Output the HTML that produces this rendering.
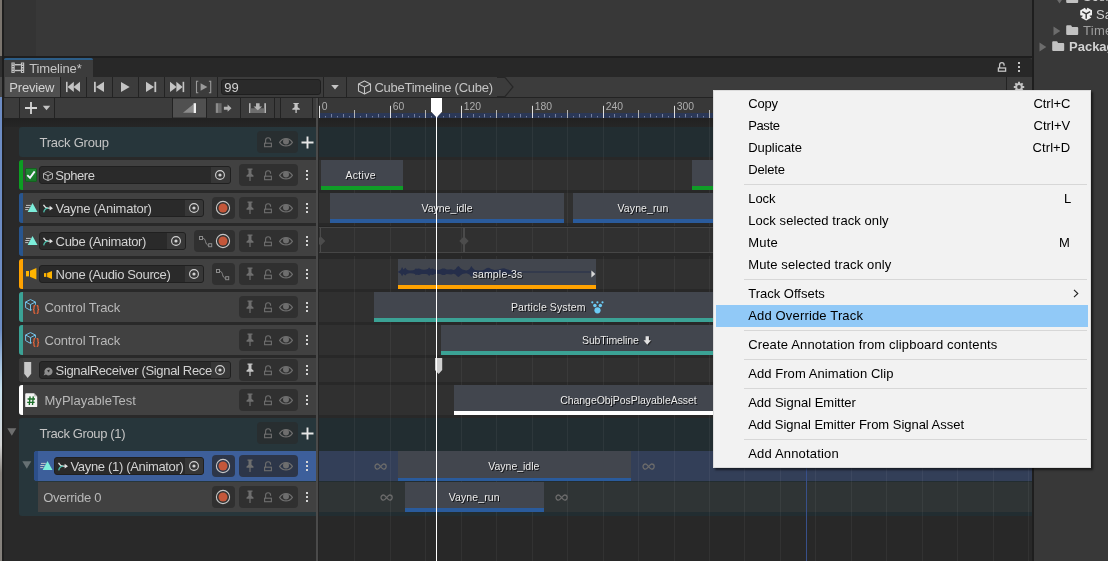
<!DOCTYPE html>
<html><head><meta charset="utf-8"><title>Timeline</title>
<style>
html,body{margin:0;padding:0;background:#383838}
#root{will-change:transform;position:relative;width:1108px;height:561px;overflow:hidden;font-family:"Liberation Sans",sans-serif}
.b{position:absolute;display:block}
.t{position:absolute;white-space:nowrap;font-family:"Liberation Sans",sans-serif}
.cl{text-shadow:1px 1px 0 rgba(0,0,0,.75)}
</style></head>
<body><div id="root">
<!-- panels -->
<div class="b" style="left:0px;top:0px;width:1108px;height:561px;background:#383838;"></div>
<div class="b" style="left:4px;top:0px;width:32px;height:56px;background:#343434;"></div>
<div class="b" style="left:0px;top:0px;width:3px;height:56px;background:#7b756e;"></div>
<div class="b" style="left:0px;top:56px;width:3px;height:21px;background:#303030;"></div>
<div class="b" style="left:0px;top:77px;width:3px;height:20px;background:#4a4a4a;"></div>
<div class="b" style="left:0px;top:97px;width:3px;height:464px;background:linear-gradient(#6d8cc4 0,#6d8cc4 50%,#a8c4e0 58%,#c8e0ec 63%,#d4d4d4 75%,#8a8681 81%,#85817c 100%);"></div>
<div class="b" style="left:2px;top:0px;width:2px;height:561px;background:#1e1e1e;"></div>
<div class="b" style="left:3px;top:56px;width:1031px;height:2px;background:#1e1e1e;"></div>
<div class="b" style="left:4px;top:58px;width:1028px;height:19px;background:#282828;border-radius:0 3px 0 0;"></div>
<div class="b" style="left:4px;top:77px;width:1028px;height:20px;background:#3c3c3c;"></div>
<div class="b" style="left:4px;top:97px;width:1028px;height:1px;background:#232323;"></div>
<div class="b" style="left:4px;top:98px;width:312px;height:20px;background:#3c3c3c;"></div>
<div class="b" style="left:319px;top:98px;width:713px;height:20px;background:#383838;"></div>
<div class="b" style="left:4px;top:118px;width:1028px;height:1px;background:#222;"></div>
<div class="b" style="left:4px;top:119px;width:312px;height:442px;background:#292929;"></div>
<div class="b" style="left:319px;top:119px;width:713px;height:442px;background:#282828;"></div>
<div class="b" style="left:1032px;top:0px;width:2px;height:561px;background:#1e1e1e;"></div>
<div class="b" style="left:1034px;top:0px;width:74px;height:561px;background:#383838;"></div>
<!-- tab -->
<div class="b" style="left:4px;top:58px;width:89px;height:19px;background:#3c3c3c;border-radius:3px 3px 0 0;"></div>
<div class="b" style="left:4px;top:58px;width:89px;height:2px;background:#2c5d87;border-radius:3px 3px 0 0;"></div>
<svg class="b" style="left:11px;top:62px;" width="14" height="11" viewBox="0 0 14 11"><g fill="#c4c4c4"><rect x="0.400" y="0.500" width="3.300" height="10.400"/><rect x="9.900" y="0.500" width="3.300" height="10.400"/><rect x="3.700" y="2" width="6.200" height="1.400"/><rect x="3.700" y="7.800" width="6.200" height="1.400"/></g><g fill="#3c3c3c"><path d="M1.500 1.400h1.100v1.100H1.500zM1.500 3.900h1.100v1.100H1.500zM1.500 6.400h1.100v1.100H1.500zM1.500 8.900h1.100v1.100H1.500zM11 1.400h1.100v1.100H11zM11 3.900h1.100v1.100H11zM11 6.400h1.100v1.100H11zM11 8.900h1.100v1.100H11z"/></g></svg>
<div class="t " style="left:29.3px;top:59.50px;height:17px;line-height:17px;font-size:13px;color:#c4c4c4;letter-spacing:-0.156px;">Timeline*</div>
<svg class="b" style="left:997px;top:61px;" width="10" height="11" viewBox="0 0 10 11"><g stroke="#c4c4c4" fill="none" stroke-width="1.300"><path d="M2.600 7V3.900A2.250 2.250 0 0 1 7.100 3.900V4.700"/><rect x="1.400" y="7" width="7.200" height="3.200"/></g></svg>
<svg class="b" style="left:1018px;top:62px;" width="2" height="10" viewBox="0 0 2 10"><g fill="#c4c4c4"><path d="M0 0h2v2H0zM0 4h2v2H0zM0 8h2v2H0z"/></g></svg>
<!-- toolbar 1 -->
<div class="b" style="left:5px;top:77px;width:55px;height:20px;background:#505050;"></div>
<div class="t " style="left:9.3px;top:79.00px;height:17px;line-height:17px;font-size:13px;color:#d2d2d2;letter-spacing:-0.177px;">Preview</div>
<div class="b" style="left:60px;top:77px;width:1px;height:20px;background:#232323;"></div>
<div class="b" style="left:86px;top:77px;width:1px;height:20px;background:#232323;"></div>
<div class="b" style="left:112px;top:77px;width:1px;height:20px;background:#232323;"></div>
<div class="b" style="left:138px;top:77px;width:1px;height:20px;background:#232323;"></div>
<div class="b" style="left:164px;top:77px;width:1px;height:20px;background:#232323;"></div>
<div class="b" style="left:190px;top:77px;width:1px;height:20px;background:#232323;"></div>
<div class="b" style="left:217px;top:77px;width:1px;height:20px;background:#232323;"></div>
<div class="b" style="left:323px;top:77px;width:1px;height:20px;background:#232323;"></div>
<div class="b" style="left:346px;top:77px;width:1px;height:20px;background:#232323;"></div>
<div class="b" style="left:1006px;top:77px;width:1px;height:20px;background:#232323;"></div>
<svg class="b" style="left:61px;top:77px;" width="25" height="20" viewBox="0 0 25 20"><g fill="#c4c4c4"><rect x="5" y="4.800" width="1.600" height="10.300"/><path d="M12.8 4.8L6.6 9.95L12.8 15.100000000000001z"/><path d="M19.0 4.8L12.4 9.95L19.0 15.100000000000001z"/></g></svg>
<svg class="b" style="left:87px;top:77px;" width="25" height="20" viewBox="0 0 25 20"><g fill="#c4c4c4"><rect x="7" y="4.800" width="1.800" height="10.300"/><path d="M17 4.8L9 9.95L17 15.100000000000001z"/></g></svg>
<svg class="b" style="left:113px;top:77px;" width="25" height="20" viewBox="0 0 25 20"><g fill="#c4c4c4"><path d="M8 4.9L16.7 9.9L8 14.9z"/></g></svg>
<svg class="b" style="left:139px;top:77px;" width="25" height="20" viewBox="0 0 25 20"><g fill="#c4c4c4"><path d="M7 4.8L15 9.95L7 15.100000000000001z"/><rect x="15.400" y="4.800" width="1.800" height="10.300"/></g></svg>
<svg class="b" style="left:165px;top:77px;" width="25" height="20" viewBox="0 0 25 20"><g fill="#c4c4c4"><path d="M5 4.8L11.6 9.95L5 15.100000000000001z"/><path d="M11.4 4.8L17.6 9.95L11.4 15.100000000000001z"/><rect x="17.600" y="4.800" width="1.600" height="10.300"/></g></svg>
<svg class="b" style="left:191px;top:77px;" width="26" height="20" viewBox="0 0 26 20"><g fill="none" stroke="#9a9a9a" stroke-width="1.100"><path d="M7.300 4.300H5.500V15.700H7.300M17.900 4.300H19.700V15.700H17.900"/></g><g fill="#9a9a9a"><path d="M9.6 6.2L16.4 10.0L9.6 13.8z"/></g></svg>
<div class="b" style="left:221px;top:79px;width:100px;height:16px;background:#2a2a2a;border:1px solid #1f1f1f;border-radius:3px;box-sizing:border-box;"></div>
<div class="t " style="left:224.3px;top:78.70px;height:17px;line-height:17px;font-size:13px;color:#d2d2d2;letter-spacing:-0.130px;">99</div>
<svg class="b" style="left:330px;top:84px;" width="10" height="6" viewBox="0 0 10 6"><path d="M1.200 1h7.600L5 5.400z" fill="#c4c4c4"/></svg>
<svg class="b" style="left:357px;top:79.6px;" width="15" height="15" viewBox="0 0 15 15"><g stroke="#c4c4c4"><g fill="none" stroke-width="1.100" stroke-linejoin="round"><path d="M7.500 1L13.500 4V11L7.500 14L1.500 11V4z"/><path d="M1.500 4L7.500 7L13.500 4M7.500 7V14"/></g></g></svg>
<div class="t " style="left:374.4px;top:78.70px;height:17px;line-height:17px;font-size:13px;color:#c4c4c4;letter-spacing:-0.241px;">CubeTimeline (Cube)</div>
<svg class="b" style="left:496px;top:77px;" width="18" height="20" viewBox="0 0 18 20"><path d="M1 0.500H9L17 10L9 19.500H1" fill="none" stroke="#272727" stroke-width="1.200"/></svg>
<svg class="b" style="left:1012px;top:80px;" width="14" height="14" viewBox="0 0 14 14"><path d="M5.96 3.24L6.10 1.78L7.90 1.78L8.04 3.24L8.92 3.61L10.06 2.67L11.33 3.94L10.39 5.08L10.76 5.96L12.22 6.10L12.22 7.90L10.76 8.04L10.39 8.92L11.33 10.06L10.06 11.33L8.92 10.39L8.04 10.76L7.90 12.22L6.10 12.22L5.96 10.76L5.08 10.39L3.94 11.33L2.67 10.06L3.61 8.92L3.24 8.04L1.78 7.90L1.78 6.10L3.24 5.96L3.61 5.08L2.67 3.94L3.94 2.67L5.08 3.61z" fill="#c4c4c4"/><circle cx="7" cy="7" r="1.900" fill="#3c3c3c"/></svg>
<!-- toolbar 2 -->
<div class="b" style="left:19px;top:98px;width:1px;height:20px;background:#232323;"></div>
<div class="b" style="left:54px;top:98px;width:1px;height:20px;background:#232323;"></div>
<div class="b" style="left:172px;top:98px;width:1px;height:20px;background:#232323;"></div>
<div class="b" style="left:206px;top:98px;width:1px;height:20px;background:#232323;"></div>
<div class="b" style="left:240px;top:98px;width:1px;height:20px;background:#232323;"></div>
<div class="b" style="left:274px;top:98px;width:1px;height:20px;background:#232323;"></div>
<div class="b" style="left:280px;top:98px;width:1px;height:20px;background:#232323;"></div>
<div class="b" style="left:312px;top:98px;width:1px;height:20px;background:#232323;"></div>
<div class="b" style="left:173px;top:99px;width:33px;height:18px;background:#505050;"></div>
<svg class="b" style="left:24px;top:101px;" width="14" height="14" viewBox="0 0 14 14"><path d="M7 1v12M1 7h12" stroke="#d6d6d6" stroke-width="1.800" fill="none"/></svg>
<svg class="b" style="left:41.5px;top:105.2px;" width="9" height="6" viewBox="0 0 9 6"><path d="M0.800 0.800h7.400L4.500 5.200z" fill="#c4c4c4"/></svg>
<svg class="b" style="left:180px;top:101px;" width="20" height="14" viewBox="0 0 20 14"><path d="M3 11.700H13.600V3z" fill="#8c8c8c"/><rect x="13.600" y="2.200" width="2.400" height="9.800" fill="#f0f0f0"/></svg>
<svg class="b" style="left:214px;top:101px;" width="20" height="14" viewBox="0 0 20 14"><rect x="1.800" y="2.200" width="2.800" height="9.700" fill="#8c8c8c"/><rect x="4.600" y="2.200" width="3" height="9.700" fill="#6a6a6a"/><path d="M9.900 5.700h3.700V3.600l3.900 3.600-3.900 3.600V8.700H9.900z" fill="#b4b4b4"/></svg>
<svg class="b" style="left:247px;top:101px;" width="20" height="14" viewBox="0 0 20 14"><rect x="2" y="2.200" width="1.600" height="9.800" fill="#b4b4b4"/><rect x="17.300" y="2.200" width="1.700" height="9.800" fill="#b4b4b4"/><rect x="3.600" y="7.300" width="13.700" height="4.700" fill="#6e6e6e"/><path d="M9 2.200h3.600V5.500h2.500l-4.300 3.800-4.300-3.800H9z" fill="#b4b4b4"/></svg>
<svg class="b" style="left:290px;top:101px;" width="12" height="14" viewBox="0 0 12 14"><g fill="#c4c4c4" transform="translate(-0.400 1.700) scale(1.080 0.800)"><path d="M3.500 0.500h5v1.200h-1v4l2 1.800v1.200H6.600V13H5.400V8.700H2.500V7.500l2-1.800v-4h-1z"/></g></svg>
<!-- ruler -->
<div class="b" style="left:319px;top:113px;width:713px;height:5px;background:#2b3857;"></div>
<div class="t " style="left:321.8px;top:99.50px;height:14.4px;line-height:14.4px;font-size:10.4px;color:#adadad;">0</div>
<div class="t " style="left:392.8px;top:99.50px;height:14.4px;line-height:14.4px;font-size:10.4px;color:#adadad;">60</div>
<div class="t " style="left:463.8px;top:99.50px;height:14.4px;line-height:14.4px;font-size:10.4px;color:#adadad;">120</div>
<div class="t " style="left:534.8px;top:99.50px;height:14.4px;line-height:14.4px;font-size:10.4px;color:#adadad;">180</div>
<div class="t " style="left:605.8px;top:99.50px;height:14.4px;line-height:14.4px;font-size:10.4px;color:#adadad;">240</div>
<div class="t " style="left:676.8px;top:99.50px;height:14.4px;line-height:14.4px;font-size:10.4px;color:#adadad;">300</div>
<div class="t " style="left:746.8px;top:99.50px;height:14.4px;line-height:14.4px;font-size:10.4px;color:#adadad;">360</div>
<div class="t " style="left:817.8px;top:99.50px;height:14.4px;line-height:14.4px;font-size:10.4px;color:#adadad;">420</div>
<div class="t " style="left:888.8px;top:99.50px;height:14.4px;line-height:14.4px;font-size:10.4px;color:#adadad;">480</div>
<div class="t " style="left:959.8px;top:99.50px;height:14.4px;line-height:14.4px;font-size:10.4px;color:#adadad;">540</div>
<div class="t " style="left:1030.8px;top:99.50px;height:14.4px;line-height:14.4px;font-size:10.4px;color:#adadad;">600</div>
<svg class="b" style="left:319px;top:98px;" width="712" height="20" viewBox="0 0 712 20"><path d="M6.5 18v1.400M12.5 16v3.400M18.5 18v1.400M24.5 16v3.400M30.5 18v1.400M41.5 18v1.400M47.5 16v3.400M53.5 18v1.400M59.5 16v3.400M65.5 18v1.400M77.5 18v1.400M83.5 16v3.400M89.5 18v1.400M95.5 16v3.400M100.5 18v1.400M112.5 18v1.400M118.5 16v3.400M124.5 18v1.400M130.5 16v3.400M136.5 18v1.400M148.5 18v1.400M154.5 16v3.400M160.5 18v1.400M165.5 16v3.400M171.5 18v1.400M183.5 18v1.400M189.5 16v3.400M195.5 18v1.400M201.5 16v3.400M207.5 18v1.400M219.5 18v1.400M225.5 16v3.400M230.5 18v1.400M236.5 16v3.400M242.5 18v1.400M254.5 18v1.400M260.5 16v3.400M266.5 18v1.400M272.5 16v3.400M278.5 18v1.400M290.5 18v1.400M295.5 16v3.400M301.5 18v1.400M307.5 16v3.400M313.5 18v1.400M325.5 18v1.400M331.5 16v3.400M337.5 18v1.400M343.5 16v3.400M349.5 18v1.400M360.5 18v1.400M366.5 16v3.400M372.5 18v1.400M378.5 16v3.400M384.5 18v1.400M396.5 18v1.400M402.5 16v3.400M408.5 18v1.400M414.5 16v3.400M419.5 18v1.400M431.5 18v1.400M437.5 16v3.400M443.5 18v1.400M449.5 16v3.400M455.5 18v1.400M467.5 18v1.400M473.5 16v3.400M479.5 18v1.400M484.5 16v3.400M490.5 18v1.400M502.5 18v1.400M508.5 16v3.400M514.5 18v1.400M520.5 16v3.400M526.5 18v1.400M538.5 18v1.400M544.5 16v3.400M549.5 18v1.400M555.5 16v3.400M561.5 18v1.400M573.5 18v1.400M579.5 16v3.400M585.5 18v1.400M591.5 16v3.400M597.5 18v1.400M609.5 18v1.400M614.5 16v3.400M620.5 18v1.400M626.5 16v3.400M632.5 18v1.400M644.5 18v1.400M650.5 16v3.400M656.5 18v1.400M662.5 16v3.400M668.5 18v1.400M679.5 18v1.400M685.5 16v3.400M691.5 18v1.400M697.5 16v3.400M703.5 18v1.400" stroke="#76809f" stroke-width="1"/><path d="M35.5 12v8M106.5 12v8M177.5 12v8M248.5 12v8M319.5 12v8M390.5 12v8M461.5 12v8M532.5 12v8M603.5 12v8M674.5 12v8" stroke="#b4b4b4" stroke-width="1"/><path d="M0.5 7.800v12.200M71.5 7.800v12.200M142.5 7.800v12.200M213.5 7.800v12.200M284.5 7.800v12.200M355.5 7.800v12.200M425.5 7.800v12.200M496.5 7.800v12.200M567.5 7.800v12.200M638.5 7.800v12.200M709.5 7.800v12.200" stroke="#dedede" stroke-width="1"/></svg>
<div class="b" style="left:4px;top:119px;width:1028px;height:8px;background:linear-gradient(#222222,#262626);"></div>
<!-- clip-area rows -->
<div class="b" style="left:319px;top:127px;width:713px;height:30px;background:#222d31;"></div>
<div class="b" style="left:319px;top:160px;width:713px;height:30px;background:#303030;"></div>
<div class="b" style="left:319px;top:193px;width:713px;height:30px;background:#303030;"></div>
<div class="b" style="left:319px;top:226px;width:713px;height:30px;background:#303030;"></div>
<div class="b" style="left:319px;top:259px;width:713px;height:30px;background:#303030;"></div>
<div class="b" style="left:319px;top:292px;width:713px;height:30px;background:#303030;"></div>
<div class="b" style="left:319px;top:325px;width:713px;height:30px;background:#303030;"></div>
<div class="b" style="left:319px;top:358px;width:713px;height:24px;background:#303030;"></div>
<div class="b" style="left:319px;top:385px;width:713px;height:30px;background:#303030;"></div>
<div class="b" style="left:319px;top:418px;width:713px;height:98px;background:#222d31;"></div>
<div class="b" style="left:319px;top:451px;width:713px;height:30px;background:#333f58;"></div>
<div class="b" style="left:319px;top:482px;width:713px;height:30px;background:#2f3435;"></div>
<svg class="b" style="left:319px;top:118px;" width="712" height="443" viewBox="0 0 712 443"><path d="M35.5 0v443M71.5 0v443M106.5 0v443M142.5 0v443M177.5 0v443M213.5 0v443M248.5 0v443M284.5 0v443M319.5 0v443M355.5 0v443M390.5 0v443M425.5 0v443M461.5 0v443M496.5 0v443M532.5 0v443M567.5 0v443M603.5 0v443M638.5 0v443M674.5 0v443M709.5 0v443" stroke="#ffffff" stroke-opacity="0.050" stroke-width="1"/><path d="M487.500 349V443" stroke="#38508a" stroke-width="1"/></svg>
<div class="b" style="left:316px;top:98px;width:2.2px;height:463px;background:#4a4a4a;"></div><div class="b" style="left:318.2px;top:98px;width:0.8px;height:463px;background:#252525;"></div>
<!-- track group -->
<div class="b" style="left:19px;top:127px;width:297px;height:30px;background:#27363b;border-radius:3px 0 0 3px;"></div>
<div class="t " style="left:39.5px;top:133.80px;height:17px;line-height:17px;font-size:13px;color:#c4c4c4;letter-spacing:-0.233px;">Track Group</div>
<div class="b" style="left:257px;top:131.0px;width:41px;height:22px;background:#282e30;border-radius:4px;"></div><svg class="b" style="left:263px;top:136.0px;" width="10" height="12" viewBox="0 0 10 12"><g stroke="#6e6e6e"><path d="M2.600 7.200V4.300A2.500 2.500 0 0 1 7.600 4.300V4.700" fill="none" stroke-width="1.100"/><rect x="1.600" y="7.200" width="6.800" height="3.500" fill="none" stroke-width="1.100"/></g></svg><svg class="b" style="left:279px;top:137.8px;" width="14" height="9" viewBox="0 0 14 9"><g stroke="#6e6e6e" fill="#6e6e6e"><path d="M0.600 4.300C2.600 1.400 5 0.700 7 0.700S11.400 1.400 13.400 4.300C11.400 7.200 9 7.900 7 7.900S2.600 7.200 0.600 4.300z" fill="none" stroke-width="1.200"/><circle cx="7" cy="3.600" r="3" stroke="none"/></g></svg>
<svg class="b" style="left:300.5px;top:135.5px;" width="13" height="13" viewBox="0 0 13 13"><path d="M6.500 0.500v12M0.500 6.500h12" stroke="#e6e6e6" stroke-width="1.900" fill="none"/></svg>
<!-- sphere -->
<div class="b" style="left:19px;top:160px;width:297px;height:30px;background:#414141;border-radius:3px 0 0 3px;"></div><div class="b" style="left:19px;top:160px;width:4px;height:30px;background:#0c9e22;border-radius:3px 0 0 3px;"></div>
<div class="b" style="left:25px;top:168px;width:12.3px;height:14px;background:linear-gradient(#1f8a31,#187629);border:1px solid #14611f;box-sizing:border-box;border-radius:1px;"></div>
<svg class="b" style="left:26px;top:170px;" width="10" height="10" viewBox="0 0 10 10"><path d="M1.300 5.200L4 7.900L8.700 1.400" fill="none" stroke="#f4f0ff" stroke-width="1.900"/></svg>
<div class="b" style="left:39px;top:166px;width:192px;height:18px;background:#2a2a2a;border:1px solid #202020;border-radius:3px;box-sizing:border-box;"></div><div class="b" style="left:211px;top:167px;width:19px;height:16px;background:#373737;border-radius:0 2px 2px 0;"></div><svg class="b" style="left:213.6px;top:168.8px;" width="12" height="12" viewBox="0 0 12 12"><circle cx="6" cy="6" r="4.400" fill="none" stroke="#d2d2d2" stroke-width="1.100"/><circle cx="6" cy="6" r="1.600" fill="#d2d2d2"/></svg>
<svg class="b" style="left:42.7px;top:171px;" width="10" height="10" viewBox="0 0 10 10"><g fill="none" stroke="#b8b8b8" stroke-width="0.950" stroke-linejoin="round"><path d="M5 0.500L9.500 2.600L5 4.700L0.500 2.600z"/><path d="M0.500 2.600V7.400L5 9.500L9.500 7.400V2.600M5 4.700V9.500"/></g></svg>
<div class="t " style="left:55.2px;top:166.80px;height:17px;line-height:17px;font-size:13px;color:#d2d2d2;letter-spacing:-0.437px;">Sphere</div>
<div class="b" style="left:239px;top:164.0px;width:59px;height:22px;background:#303030;border-radius:4px;"></div><svg class="b" style="left:244px;top:167.7px;" width="12" height="14" viewBox="0 0 12 14"><g fill="#6e6e6e"><path d="M3.500 0.500h5v1.200h-1v4l2 1.800v1.200H6.600V13H5.400V8.700H2.500V7.500l2-1.800v-4h-1z"/></g></svg><svg class="b" style="left:263px;top:169.0px;" width="10" height="12" viewBox="0 0 10 12"><g stroke="#6e6e6e"><path d="M2.600 7.200V4.300A2.500 2.500 0 0 1 7.600 4.300V4.700" fill="none" stroke-width="1.100"/><rect x="1.600" y="7.200" width="6.800" height="3.500" fill="none" stroke-width="1.100"/></g></svg><svg class="b" style="left:279px;top:170.8px;" width="14" height="9" viewBox="0 0 14 9"><g stroke="#6e6e6e" fill="#6e6e6e"><path d="M0.600 4.300C2.600 1.400 5 0.700 7 0.700S11.400 1.400 13.400 4.300C11.400 7.200 9 7.900 7 7.900S2.600 7.200 0.600 4.300z" fill="none" stroke-width="1.200"/><circle cx="7" cy="3.600" r="3" stroke="none"/></g></svg>
<svg class="b" style="left:306px;top:170px;" width="2" height="10" viewBox="0 0 2 10"><g fill="#d4d4d4"><path d="M0 0h2v2H0zM0 4h2v2H0zM0 8h2v2H0z"/></g></svg>
<div class="b" style="left:321px;top:160px;width:82px;height:30px;background:#42464e;"></div><div class="b" style="left:321px;top:186px;width:82px;height:4px;background:#0f9d27;"></div><div class="t cl" style="left:345.4px;top:168.45px;height:14.5px;line-height:14.5px;font-size:10.5px;color:#ececec;letter-spacing:0.318px;">Active</div>
<div class="b" style="left:692px;top:160px;width:40px;height:30px;background:#42464e;"></div><div class="b" style="left:692px;top:186px;width:40px;height:4px;background:#0f9d27;"></div>
<!-- vayne -->
<div class="b" style="left:19px;top:193px;width:297px;height:30px;background:#414141;border-radius:3px 0 0 3px;"></div><div class="b" style="left:19px;top:193px;width:4px;height:30px;background:#28558e;border-radius:3px 0 0 3px;"></div>
<svg class="b" style="left:24.8px;top:203.3px;" width="13" height="9" viewBox="0 0 13 9"><path d="M7.500 0L12.500 9H2.600z" fill="#7deedb"/><path d="M1 2.400h4.800M0.300 4.500h4.300M0.200 6.600h3.200" stroke="#cfcfcf" stroke-width="0.900"/></svg>
<div class="b" style="left:39px;top:199px;width:165px;height:18px;background:#2a2a2a;border:1px solid #202020;border-radius:3px;box-sizing:border-box;"></div><div class="b" style="left:185px;top:200px;width:18px;height:16px;background:#373737;border-radius:0 2px 2px 0;"></div><svg class="b" style="left:187.6px;top:201.8px;" width="12" height="12" viewBox="0 0 12 12"><circle cx="6" cy="6" r="4.400" fill="none" stroke="#d2d2d2" stroke-width="1.100"/><circle cx="6" cy="6" r="1.600" fill="#d2d2d2"/></svg>
<svg class="b" style="left:43px;top:204.4px;" width="10" height="9" viewBox="0 0 10 9"><path d="M0.500 0.700C2 3.600 3.400 4.200 5.200 4.200H7.200" fill="none" stroke="#e0e0e0" stroke-width="1.300"/><path d="M0.700 8.300C1.300 5.600 2.600 4.200 5.200 4.200" fill="none" stroke="#4fc1ae" stroke-width="1.300"/><path d="M6.600 1.800L10 4.200L6.600 6.600z" fill="#e0e0e0"/></svg>
<div class="t " style="left:55.6px;top:199.80px;height:17px;line-height:17px;font-size:13px;color:#d2d2d2;letter-spacing:-0.262px;">Vayne (Animator)</div>
<div class="b" style="left:212px;top:197px;width:23px;height:22px;background:#303030;border-radius:4px;"></div>
<svg class="b" style="left:215px;top:200px;" width="16" height="16" viewBox="0 0 16 16"><circle cx="8" cy="8" r="6.600" fill="none" stroke="#c6c6c6" stroke-width="1.100"/><circle cx="8" cy="8" r="4.500" fill="#c4573a"/></svg>
<div class="b" style="left:239px;top:197.0px;width:59px;height:22px;background:#303030;border-radius:4px;"></div><svg class="b" style="left:244px;top:200.7px;" width="12" height="14" viewBox="0 0 12 14"><g fill="#6e6e6e"><path d="M3.500 0.500h5v1.200h-1v4l2 1.800v1.200H6.600V13H5.400V8.700H2.500V7.500l2-1.800v-4h-1z"/></g></svg><svg class="b" style="left:263px;top:202.0px;" width="10" height="12" viewBox="0 0 10 12"><g stroke="#6e6e6e"><path d="M2.600 7.200V4.300A2.500 2.500 0 0 1 7.600 4.300V4.700" fill="none" stroke-width="1.100"/><rect x="1.600" y="7.200" width="6.800" height="3.500" fill="none" stroke-width="1.100"/></g></svg><svg class="b" style="left:279px;top:203.8px;" width="14" height="9" viewBox="0 0 14 9"><g stroke="#6e6e6e" fill="#6e6e6e"><path d="M0.600 4.300C2.600 1.400 5 0.700 7 0.700S11.400 1.400 13.400 4.300C11.400 7.200 9 7.900 7 7.900S2.600 7.200 0.600 4.300z" fill="none" stroke-width="1.200"/><circle cx="7" cy="3.600" r="3" stroke="none"/></g></svg>
<svg class="b" style="left:306px;top:203px;" width="2" height="10" viewBox="0 0 2 10"><g fill="#d4d4d4"><path d="M0 0h2v2H0zM0 4h2v2H0zM0 8h2v2H0z"/></g></svg>
<div class="b" style="left:330px;top:193px;width:234px;height:30px;background:#42464e;"></div><div class="b" style="left:330px;top:219px;width:234px;height:4px;background:#2a5b9c;"></div><div class="t cl" style="left:421.5px;top:201.45px;height:14.5px;line-height:14.5px;font-size:10.5px;color:#ececec;letter-spacing:-0.018px;">Vayne_idle</div>
<div class="b" style="left:573px;top:193px;width:150px;height:30px;background:#42464e;"></div><div class="b" style="left:573px;top:219px;width:150px;height:4px;background:#2a5b9c;"></div><div class="t cl" style="left:617.5px;top:201.45px;height:14.5px;line-height:14.5px;font-size:10.5px;color:#ececec;letter-spacing:0.110px;">Vayne_run</div>
<!-- cube -->
<div class="b" style="left:19px;top:226px;width:297px;height:30px;background:#414141;border-radius:3px 0 0 3px;"></div><div class="b" style="left:19px;top:226px;width:4px;height:30px;background:#28558e;border-radius:3px 0 0 3px;"></div>
<svg class="b" style="left:24.8px;top:236.3px;" width="13" height="9" viewBox="0 0 13 9"><path d="M7.500 0L12.500 9H2.600z" fill="#7deedb"/><path d="M1 2.400h4.800M0.300 4.500h4.300M0.200 6.600h3.200" stroke="#cfcfcf" stroke-width="0.900"/></svg>
<div class="b" style="left:39px;top:232px;width:147px;height:18px;background:#2a2a2a;border:1px solid #202020;border-radius:3px;box-sizing:border-box;"></div><div class="b" style="left:167px;top:233px;width:18px;height:16px;background:#373737;border-radius:0 2px 2px 0;"></div><svg class="b" style="left:169.6px;top:234.8px;" width="12" height="12" viewBox="0 0 12 12"><circle cx="6" cy="6" r="4.400" fill="none" stroke="#d2d2d2" stroke-width="1.100"/><circle cx="6" cy="6" r="1.600" fill="#d2d2d2"/></svg>
<svg class="b" style="left:43px;top:237.4px;" width="10" height="9" viewBox="0 0 10 9"><path d="M0.500 0.700C2 3.600 3.400 4.200 5.200 4.200H7.200" fill="none" stroke="#e0e0e0" stroke-width="1.300"/><path d="M0.700 8.300C1.300 5.600 2.600 4.200 5.200 4.200" fill="none" stroke="#4fc1ae" stroke-width="1.300"/><path d="M6.600 1.800L10 4.200L6.600 6.600z" fill="#e0e0e0"/></svg>
<div class="t " style="left:55.6px;top:232.80px;height:17px;line-height:17px;font-size:13px;color:#d2d2d2;letter-spacing:-0.325px;">Cube (Animator)</div>
<div class="b" style="left:194px;top:230px;width:41px;height:22px;background:#303030;border-radius:4px;"></div>
<svg class="b" style="left:198.5px;top:235.5px;" width="14" height="12" viewBox="0 0 14 12"><g stroke="#8a8a8a"><g fill="none" stroke-width="1"><rect x="0.500" y="0.500" width="3" height="3"/><rect x="9.700" y="7.700" width="3" height="3"/><path d="M3.500 2.200C7.800 2.200 5.400 9.200 9.700 9.200"/></g></g></svg>
<svg class="b" style="left:215px;top:233px;" width="16" height="16" viewBox="0 0 16 16"><circle cx="8" cy="8" r="6.600" fill="none" stroke="#c6c6c6" stroke-width="1.100"/><circle cx="8" cy="8" r="4.500" fill="#c4573a"/></svg>
<div class="b" style="left:239px;top:230.0px;width:59px;height:22px;background:#303030;border-radius:4px;"></div><svg class="b" style="left:244px;top:233.7px;" width="12" height="14" viewBox="0 0 12 14"><g fill="#6e6e6e"><path d="M3.500 0.500h5v1.200h-1v4l2 1.800v1.200H6.600V13H5.400V8.700H2.500V7.500l2-1.800v-4h-1z"/></g></svg><svg class="b" style="left:263px;top:235.0px;" width="10" height="12" viewBox="0 0 10 12"><g stroke="#6e6e6e"><path d="M2.600 7.200V4.300A2.500 2.500 0 0 1 7.600 4.300V4.700" fill="none" stroke-width="1.100"/><rect x="1.600" y="7.200" width="6.800" height="3.500" fill="none" stroke-width="1.100"/></g></svg><svg class="b" style="left:279px;top:236.8px;" width="14" height="9" viewBox="0 0 14 9"><g stroke="#6e6e6e" fill="#6e6e6e"><path d="M0.600 4.300C2.600 1.400 5 0.700 7 0.700S11.400 1.400 13.400 4.300C11.400 7.200 9 7.900 7 7.900S2.600 7.200 0.600 4.300z" fill="none" stroke-width="1.200"/><circle cx="7" cy="3.600" r="3" stroke="none"/></g></svg>
<svg class="b" style="left:306px;top:236px;" width="2" height="10" viewBox="0 0 2 10"><g fill="#d4d4d4"><path d="M0 0h2v2H0zM0 4h2v2H0zM0 8h2v2H0z"/></g></svg>
<div class="b" style="left:319px;top:227px;width:712px;height:1.2px;background:#464646;"></div>
<div class="b" style="left:319px;top:251.6px;width:712px;height:1.2px;background:#464646;"></div>
<div class="b" style="left:319px;top:226px;width:712px;height:1px;background:#242424;"></div>
<div class="b" style="left:319px;top:253px;width:712px;height:3px;background:#282828;"></div>
<div class="b" style="left:320px;top:228px;width:1.2px;height:24px;background:#4a4a4a;"></div>
<div class="b" style="left:463.4px;top:228px;width:1.2px;height:24px;background:#4a4a4a;"></div>
<svg class="b" style="left:319px;top:236px;" width="7" height="10" viewBox="0 0 7 10"><path d="M1.600 0.300L6.300 5L1.600 9.700L-3.100 5z" fill="#4c4c4c"/></svg>
<svg class="b" style="left:459px;top:236px;" width="10" height="10" viewBox="0 0 10 10"><path d="M5 0.300L9.700 5L5 9.700L0.300 5z" fill="#4c4c4c"/></svg>
<!-- audio -->
<div class="b" style="left:19px;top:259px;width:297px;height:30px;background:#414141;border-radius:3px 0 0 3px;"></div><div class="b" style="left:19px;top:259px;width:4px;height:30px;background:#ffa200;border-radius:3px 0 0 3px;"></div>
<svg class="b" style="left:26px;top:268.3px;" width="11" height="12" viewBox="0 0 11 12"><g fill="#ffb400"><path d="M0 3h3v5.400H0z"/><path d="M4 2.700L10.400 0V11.400L4 8.700z"/></g></svg>
<div class="b" style="left:39px;top:265px;width:165px;height:18px;background:#2a2a2a;border:1px solid #202020;border-radius:3px;box-sizing:border-box;"></div><div class="b" style="left:185px;top:266px;width:18px;height:16px;background:#373737;border-radius:0 2px 2px 0;"></div><svg class="b" style="left:187.6px;top:267.8px;" width="12" height="12" viewBox="0 0 12 12"><circle cx="6" cy="6" r="4.400" fill="none" stroke="#d2d2d2" stroke-width="1.100"/><circle cx="6" cy="6" r="1.600" fill="#d2d2d2"/></svg>
<svg class="b" style="left:43.8px;top:270.8px;" width="8.5" height="8" viewBox="0 0 8.5 8"><g fill="#ffb400" transform="scale(0.78 0.7)"><path d="M0 3h3v5.400H0z"/><path d="M4 2.700L10.400 0V11.400L4 8.700z"/></g></svg>
<div class="t " style="left:55.6px;top:265.80px;height:17px;line-height:17px;font-size:13px;color:#d2d2d2;letter-spacing:-0.348px;">None (Audio Source)</div>
<div class="b" style="left:212px;top:263px;width:23px;height:22px;background:#303030;border-radius:4px;"></div>
<svg class="b" style="left:216.3px;top:268.5px;" width="14" height="12" viewBox="0 0 14 12"><g stroke="#8a8a8a"><g fill="none" stroke-width="1"><rect x="0.500" y="0.500" width="3" height="3"/><rect x="9.700" y="7.700" width="3" height="3"/><path d="M3.500 2.200C7.800 2.200 5.400 9.200 9.700 9.200"/></g></g></svg>
<div class="b" style="left:239px;top:263.0px;width:59px;height:22px;background:#303030;border-radius:4px;"></div><svg class="b" style="left:244px;top:266.7px;" width="12" height="14" viewBox="0 0 12 14"><g fill="#6e6e6e"><path d="M3.500 0.500h5v1.200h-1v4l2 1.800v1.200H6.600V13H5.400V8.700H2.500V7.500l2-1.800v-4h-1z"/></g></svg><svg class="b" style="left:263px;top:268.0px;" width="10" height="12" viewBox="0 0 10 12"><g stroke="#6e6e6e"><path d="M2.600 7.200V4.300A2.500 2.500 0 0 1 7.600 4.300V4.700" fill="none" stroke-width="1.100"/><rect x="1.600" y="7.200" width="6.800" height="3.500" fill="none" stroke-width="1.100"/></g></svg><svg class="b" style="left:279px;top:269.8px;" width="14" height="9" viewBox="0 0 14 9"><g stroke="#6e6e6e" fill="#6e6e6e"><path d="M0.600 4.300C2.600 1.400 5 0.700 7 0.700S11.400 1.400 13.400 4.300C11.400 7.200 9 7.900 7 7.900S2.600 7.200 0.600 4.300z" fill="none" stroke-width="1.200"/><circle cx="7" cy="3.600" r="3" stroke="none"/></g></svg>
<svg class="b" style="left:306px;top:269px;" width="2" height="10" viewBox="0 0 2 10"><g fill="#d4d4d4"><path d="M0 0h2v2H0zM0 4h2v2H0zM0 8h2v2H0z"/></g></svg>
<div class="b" style="left:398px;top:259px;width:198px;height:30px;background:#42464e;"></div><div class="b" style="left:398px;top:285px;width:198px;height:4px;background:#ffa200;"></div>
<svg class="b" style="left:398.2px;top:265.4px;" width="195" height="14" viewBox="0 0 195 14"><path d="M0 7L0.0 6.7L1.6 5.8L2.7 5.0L4.1 2.0L5.4 4.6L7.3 2.8L8.7 4.6L10.3 5.2L11.9 5.5L15.2 5.2L16.8 4.6L17.9 3.2L19.0 4.0L20.0 3.6L21.1 3.5L23.8 4.6L26.0 4.8L28.2 4.5L29.8 4.0L31.2 2.4L32.5 4.0L34.7 3.5L37.0 4.6L40.1 5.0L42.2 4.6L44.4 3.4L46.6 3.6L48.7 4.6L50.9 4.4L53.1 4.2L55.8 5.0L57.6 4.0L59.0 2.0L60.7 1.0L62.3 3.0L64.4 4.6L68.2 5.5L69.9 5.0L71.5 4.0L73.4 1.0L74.7 3.0L76.9 5.0L81.2 5.5L84.5 5.2L86.6 4.5L88.8 3.0L91.0 2.8L93.1 4.0L96.4 5.0L100.7 4.5L104.0 3.5L106.1 3.2L109.4 4.5L113.7 5.4L117.0 5.8L120.2 6.1L123.5 6.4H193V7.600H123.5L123.5 7.5L120.2 7.8L117.0 8.0L113.7 8.4L109.4 9.1L106.1 10.2L104.0 10.0L100.7 9.1L96.4 8.7L93.1 9.6L91.0 10.6L88.8 10.4L86.6 9.1L84.5 8.5L81.2 8.3L76.9 8.7L74.7 10.4L73.4 12.1L71.5 9.6L69.9 8.7L68.2 8.3L64.4 9.0L62.3 10.4L60.7 12.1L59.0 11.2L57.6 9.6L55.8 8.7L53.1 9.4L50.9 9.2L48.7 9.0L46.6 9.9L44.4 10.1L42.2 9.0L40.1 8.7L37.0 9.0L34.7 10.0L32.5 9.6L31.2 10.9L29.8 9.6L28.2 9.1L26.0 8.9L23.8 9.0L21.1 10.0L20.0 9.9L19.0 9.6L17.9 10.2L16.8 9.0L15.2 8.5L11.9 8.3L10.3 8.5L8.7 9.0L7.3 10.6L5.4 9.0L4.1 11.2L2.7 8.7L1.6 8.0L0.0 7.3z" fill="#252e4a"/></svg>
<svg class="b" style="left:590.5px;top:269.5px;" width="5" height="8" viewBox="0 0 5 8"><path d="M0.400 0.600L4.400 4L0.400 7.400z" fill="#d8d8d8"/></svg>
<div class="t cl" style="left:472.5px;top:267.45px;height:14.5px;line-height:14.5px;font-size:10.5px;color:#ececec;letter-spacing:0.174px;">sample-3s</div>
<!-- control tracks -->
<div class="b" style="left:19px;top:292px;width:297px;height:30px;background:#414141;border-radius:3px 0 0 3px;"></div><div class="b" style="left:19px;top:292px;width:4px;height:30px;background:#3ba295;border-radius:3px 0 0 3px;"></div>
<svg class="b" style="left:24.6px;top:299.4px;" width="15" height="15" viewBox="0 0 15 15"><g fill="none" stroke="#74c4ea" stroke-width="1" stroke-linejoin="round"><path d="M5.500 0.600L10.400 3V8.600L5.500 11.400L0.600 8.600V3z"/><path d="M0.600 3L5.500 5.600L10.400 3M5.500 5.600V11.400"/></g><rect x="6.800" y="5.800" width="8" height="9.500" fill="#414141"/><g fill="none" stroke="#f0673a" stroke-width="1.150"><path d="M10.300 6.600H9.900Q9 6.600 9 7.500V9.400Q9 10.500 7.900 10.500Q9 10.500 9 11.600V13.500Q9 14.400 9.900 14.400H10.300"/><path d="M11.700 6.600H12.100Q13 6.600 13 7.500V9.400Q13 10.500 14.100 10.500Q13 10.500 13 11.600V13.500Q13 14.400 12.100 14.400H11.700"/></g></svg>
<div class="t " style="left:44.4px;top:298.80px;height:17px;line-height:17px;font-size:13px;color:#b8b8b8;letter-spacing:-0.123px;">Control Track</div>
<div class="b" style="left:239px;top:296.0px;width:59px;height:22px;background:#303030;border-radius:4px;"></div><svg class="b" style="left:244px;top:299.7px;" width="12" height="14" viewBox="0 0 12 14"><g fill="#6e6e6e"><path d="M3.500 0.500h5v1.200h-1v4l2 1.800v1.200H6.600V13H5.400V8.700H2.500V7.500l2-1.800v-4h-1z"/></g></svg><svg class="b" style="left:263px;top:301.0px;" width="10" height="12" viewBox="0 0 10 12"><g stroke="#6e6e6e"><path d="M2.600 7.200V4.300A2.500 2.500 0 0 1 7.600 4.300V4.700" fill="none" stroke-width="1.100"/><rect x="1.600" y="7.200" width="6.800" height="3.500" fill="none" stroke-width="1.100"/></g></svg><svg class="b" style="left:279px;top:302.8px;" width="14" height="9" viewBox="0 0 14 9"><g stroke="#6e6e6e" fill="#6e6e6e"><path d="M0.600 4.300C2.600 1.400 5 0.700 7 0.700S11.400 1.400 13.400 4.300C11.400 7.200 9 7.900 7 7.900S2.600 7.200 0.600 4.300z" fill="none" stroke-width="1.200"/><circle cx="7" cy="3.600" r="3" stroke="none"/></g></svg>
<svg class="b" style="left:306px;top:302px;" width="2" height="10" viewBox="0 0 2 10"><g fill="#d4d4d4"><path d="M0 0h2v2H0zM0 4h2v2H0zM0 8h2v2H0z"/></g></svg>
<div class="b" style="left:19px;top:325px;width:297px;height:30px;background:#414141;border-radius:3px 0 0 3px;"></div><div class="b" style="left:19px;top:325px;width:4px;height:30px;background:#3ba295;border-radius:3px 0 0 3px;"></div>
<svg class="b" style="left:24.6px;top:332.4px;" width="15" height="15" viewBox="0 0 15 15"><g fill="none" stroke="#74c4ea" stroke-width="1" stroke-linejoin="round"><path d="M5.500 0.600L10.400 3V8.600L5.500 11.400L0.600 8.600V3z"/><path d="M0.600 3L5.500 5.600L10.400 3M5.500 5.600V11.400"/></g><rect x="6.800" y="5.800" width="8" height="9.500" fill="#414141"/><g fill="none" stroke="#f0673a" stroke-width="1.150"><path d="M10.300 6.600H9.900Q9 6.600 9 7.500V9.400Q9 10.500 7.900 10.500Q9 10.500 9 11.600V13.500Q9 14.400 9.900 14.400H10.300"/><path d="M11.700 6.600H12.100Q13 6.600 13 7.500V9.400Q13 10.500 14.100 10.500Q13 10.500 13 11.600V13.500Q13 14.400 12.100 14.400H11.700"/></g></svg>
<div class="t " style="left:44.4px;top:331.80px;height:17px;line-height:17px;font-size:13px;color:#b8b8b8;letter-spacing:-0.123px;">Control Track</div>
<div class="b" style="left:239px;top:329.0px;width:59px;height:22px;background:#303030;border-radius:4px;"></div><svg class="b" style="left:244px;top:332.7px;" width="12" height="14" viewBox="0 0 12 14"><g fill="#6e6e6e"><path d="M3.500 0.500h5v1.200h-1v4l2 1.800v1.200H6.600V13H5.400V8.700H2.500V7.500l2-1.800v-4h-1z"/></g></svg><svg class="b" style="left:263px;top:334.0px;" width="10" height="12" viewBox="0 0 10 12"><g stroke="#6e6e6e"><path d="M2.600 7.200V4.300A2.500 2.500 0 0 1 7.600 4.300V4.700" fill="none" stroke-width="1.100"/><rect x="1.600" y="7.200" width="6.800" height="3.500" fill="none" stroke-width="1.100"/></g></svg><svg class="b" style="left:279px;top:335.8px;" width="14" height="9" viewBox="0 0 14 9"><g stroke="#6e6e6e" fill="#6e6e6e"><path d="M0.600 4.300C2.600 1.400 5 0.700 7 0.700S11.400 1.400 13.400 4.300C11.400 7.200 9 7.900 7 7.900S2.600 7.200 0.600 4.300z" fill="none" stroke-width="1.200"/><circle cx="7" cy="3.600" r="3" stroke="none"/></g></svg>
<svg class="b" style="left:306px;top:335px;" width="2" height="10" viewBox="0 0 2 10"><g fill="#d4d4d4"><path d="M0 0h2v2H0zM0 4h2v2H0zM0 8h2v2H0z"/></g></svg>
<div class="b" style="left:374px;top:292px;width:360px;height:30px;background:#42464e;"></div><div class="b" style="left:374px;top:318px;width:360px;height:4px;background:#3ba295;"></div><div class="t cl" style="left:510.9px;top:300.45px;height:14.5px;line-height:14.5px;font-size:10.5px;color:#ececec;letter-spacing:0.117px;">Particle System</div>
<svg class="b" style="left:590.5px;top:300.5px;" width="13" height="13" viewBox="0 0 13 13"><g fill="#6ccbf5"><circle cx="1.300" cy="1.300" r="1.100"/><circle cx="6.400" cy="1.300" r="1.100"/><circle cx="11.500" cy="1.300" r="1.100"/><circle cx="3.900" cy="4.400" r="1.750"/><circle cx="9.300" cy="4.400" r="1.750"/><circle cx="6.500" cy="9.300" r="3.100"/></g></svg>
<div class="b" style="left:441px;top:325px;width:290px;height:30px;background:#42464e;"></div><div class="b" style="left:441px;top:351px;width:290px;height:4px;background:#3ba295;"></div><div class="t cl" style="left:582.0px;top:333.45px;height:14.5px;line-height:14.5px;font-size:10.5px;color:#ececec;letter-spacing:-0.125px;">SubTimeline</div>
<svg class="b" style="left:643.2px;top:335.8px;" width="9" height="10" viewBox="0 0 9 10"><path d="M3.600 1.300h3.300V5.200H9L5.250 9.700L1.500 5.200H3.600z" fill="#1c1c1c" opacity="0.700"/><path d="M2.600 0.300h3.300V4.200H8L4.250 8.700L0.500 4.200H2.600z" fill="#e2e2e2"/></svg>
<!-- signal -->
<div class="b" style="left:19px;top:358px;width:297px;height:24px;background:#414141;border-radius:3px 0 0 3px;"></div><div class="b" style="left:19px;top:358px;width:4px;height:24px;background:#3b3b3b;border-radius:3px 0 0 3px;"></div>
<svg class="b" style="left:23.8px;top:362px;" width="8" height="17" viewBox="0 0 8 17"><path d="M0.200 0.100H7.200V11.800L3.700 16.100L0.200 11.800z" fill="#c8c8c8"/></svg>
<div class="b" style="left:39px;top:361px;width:192px;height:18px;background:#2a2a2a;border:1px solid #202020;border-radius:3px;box-sizing:border-box;"></div><div class="b" style="left:211px;top:362px;width:19px;height:16px;background:#373737;border-radius:0 2px 2px 0;"></div><svg class="b" style="left:213.6px;top:363.8px;" width="12" height="12" viewBox="0 0 12 12"><circle cx="6" cy="6" r="4.400" fill="none" stroke="#d2d2d2" stroke-width="1.100"/><circle cx="6" cy="6" r="1.600" fill="#d2d2d2"/></svg>
<svg class="b" style="left:43.2px;top:366.7px;" width="10" height="9" viewBox="0 0 10 9"><path d="M5.600 0.600A3.900 3.900 0 1 1 3 7.400L0.600 8.400L1.700 5.900A3.900 3.900 0 0 1 5.600 0.600z" fill="#8e8e8e"/><path d="M4 3.600L6.800 2.400L6 5.600z" fill="#2a2a2a"/></svg>
<div class="b" style="left:55.6px;top:361px;width:156px;height:18px;overflow:hidden"><div class="t " style="left:0.0px;top:0.80px;height:17px;line-height:17px;font-size:13px;color:#d2d2d2;letter-spacing:-0.342px;">SignalReceiver (Signal Receiver)</div></div>
<div class="b" style="left:239px;top:359.0px;width:59px;height:22px;background:#303030;border-radius:4px;"></div><svg class="b" style="left:244px;top:362.7px;" width="12" height="14" viewBox="0 0 12 14"><g fill="#c4c4c4"><path d="M3.500 0.500h5v1.200h-1v4l2 1.800v1.200H6.600V13H5.400V8.700H2.500V7.500l2-1.800v-4h-1z"/></g></svg><svg class="b" style="left:263px;top:364.0px;" width="10" height="12" viewBox="0 0 10 12"><g stroke="#6e6e6e"><path d="M2.600 7.200V4.300A2.500 2.500 0 0 1 7.600 4.300V4.700" fill="none" stroke-width="1.100"/><rect x="1.600" y="7.200" width="6.800" height="3.500" fill="none" stroke-width="1.100"/></g></svg><svg class="b" style="left:279px;top:365.8px;" width="14" height="9" viewBox="0 0 14 9"><g stroke="#6e6e6e" fill="#6e6e6e"><path d="M0.600 4.300C2.600 1.400 5 0.700 7 0.700S11.400 1.400 13.400 4.300C11.400 7.200 9 7.900 7 7.900S2.600 7.200 0.600 4.300z" fill="none" stroke-width="1.200"/><circle cx="7" cy="3.600" r="3" stroke="none"/></g></svg>
<svg class="b" style="left:306px;top:365px;" width="2" height="10" viewBox="0 0 2 10"><g fill="#d4d4d4"><path d="M0 0h2v2H0zM0 4h2v2H0zM0 8h2v2H0z"/></g></svg>
<svg class="b" style="left:435px;top:358px;" width="8" height="16" viewBox="0 0 8 16"><path d="M0 0H7.200V12L3.600 16L0 12z" fill="#cfcfcf"/></svg>
<!-- playable -->
<div class="b" style="left:19px;top:385px;width:297px;height:30px;background:#414141;border-radius:3px 0 0 3px;"></div><div class="b" style="left:19px;top:385px;width:4px;height:30px;background:#ffffff;border-radius:3px 0 0 3px;"></div>
<svg class="b" style="left:25px;top:392.8px;" width="13" height="14.5" viewBox="0 0 13 14.5"><path d="M1.200 0.200H9L12.200 3.400V13.200A1 1 0 0 1 11.200 14.200H1.200A1 1 0 0 1 0.200 13.200V1.200A1 1 0 0 1 1.200 0.200z" fill="#f2f2f2"/><path d="M9 0.200V3.400H12.200z" fill="#c2c2c2"/><path d="M5.100 3.400L4.300 12M8.300 3.400L7.500 12M2.600 6H10M2.200 9.400H9.600" stroke="#1b6e29" stroke-width="1.350" fill="none"/></svg>
<div class="t " style="left:44.5px;top:391.80px;height:17px;line-height:17px;font-size:13px;color:#b8b8b8;letter-spacing:0.033px;">MyPlayableTest</div>
<div class="b" style="left:239px;top:389.0px;width:59px;height:22px;background:#303030;border-radius:4px;"></div><svg class="b" style="left:244px;top:392.7px;" width="12" height="14" viewBox="0 0 12 14"><g fill="#6e6e6e"><path d="M3.500 0.500h5v1.200h-1v4l2 1.800v1.200H6.600V13H5.400V8.700H2.500V7.500l2-1.800v-4h-1z"/></g></svg><svg class="b" style="left:263px;top:394.0px;" width="10" height="12" viewBox="0 0 10 12"><g stroke="#6e6e6e"><path d="M2.600 7.200V4.300A2.500 2.500 0 0 1 7.600 4.300V4.700" fill="none" stroke-width="1.100"/><rect x="1.600" y="7.200" width="6.800" height="3.500" fill="none" stroke-width="1.100"/></g></svg><svg class="b" style="left:279px;top:395.8px;" width="14" height="9" viewBox="0 0 14 9"><g stroke="#6e6e6e" fill="#6e6e6e"><path d="M0.600 4.300C2.600 1.400 5 0.700 7 0.700S11.400 1.400 13.400 4.300C11.400 7.200 9 7.900 7 7.900S2.600 7.200 0.600 4.300z" fill="none" stroke-width="1.200"/><circle cx="7" cy="3.600" r="3" stroke="none"/></g></svg>
<svg class="b" style="left:306px;top:395px;" width="2" height="10" viewBox="0 0 2 10"><g fill="#d4d4d4"><path d="M0 0h2v2H0zM0 4h2v2H0zM0 8h2v2H0z"/></g></svg>
<div class="b" style="left:454px;top:385px;width:280px;height:30px;background:#42464e;"></div><div class="b" style="left:454px;top:411px;width:280px;height:4px;background:#ffffff;"></div><div class="t cl" style="left:560.2px;top:393.45px;height:14.5px;line-height:14.5px;font-size:10.5px;color:#ececec;letter-spacing:-0.050px;">ChangeObjPosPlayableAsset</div>
<!-- track group (1) -->
<div class="b" style="left:19px;top:418px;width:297px;height:98px;background:#27363b;border-radius:3px 0 0 3px;"></div>
<svg class="b" style="left:7px;top:428px;" width="10" height="8" viewBox="0 0 10 8"><path d="M0.300 0.300H9.300L4.800 7.700z" fill="#6e6e6e"/></svg>
<div class="t " style="left:39.4px;top:424.80px;height:17px;line-height:17px;font-size:13px;color:#c4c4c4;letter-spacing:-0.371px;">Track Group (1)</div>
<div class="b" style="left:257px;top:422.0px;width:41px;height:22px;background:#282e30;border-radius:4px;"></div><svg class="b" style="left:263px;top:427.0px;" width="10" height="12" viewBox="0 0 10 12"><g stroke="#6e6e6e"><path d="M2.600 7.200V4.300A2.500 2.500 0 0 1 7.600 4.300V4.700" fill="none" stroke-width="1.100"/><rect x="1.600" y="7.200" width="6.800" height="3.500" fill="none" stroke-width="1.100"/></g></svg><svg class="b" style="left:279px;top:428.8px;" width="14" height="9" viewBox="0 0 14 9"><g stroke="#6e6e6e" fill="#6e6e6e"><path d="M0.600 4.300C2.600 1.400 5 0.700 7 0.700S11.400 1.400 13.400 4.300C11.400 7.200 9 7.900 7 7.900S2.600 7.200 0.600 4.300z" fill="none" stroke-width="1.200"/><circle cx="7" cy="3.600" r="3" stroke="none"/></g></svg>
<svg class="b" style="left:300.5px;top:426.5px;" width="13" height="13" viewBox="0 0 13 13"><path d="M6.500 0.500v12M0.500 6.500h12" stroke="#e6e6e6" stroke-width="1.900" fill="none"/></svg>
<div class="b" style="left:34px;top:451px;width:282px;height:30px;background:#3d5f9b;border-radius:3px 0 0 3px;"></div>
<div class="b" style="left:34px;top:451px;width:4px;height:30px;background:#2c4f8a;border-radius:3px 0 0 3px;"></div>
<svg class="b" style="left:21.6px;top:461px;" width="10" height="8" viewBox="0 0 10 8"><path d="M0.300 0.300H9.300L4.800 7.700z" fill="#667073"/></svg>
<svg class="b" style="left:40px;top:461.3px;" width="13" height="9" viewBox="0 0 13 9"><path d="M7.500 0L12.500 9H2.600z" fill="#7deedb"/><path d="M1 2.400h4.800M0.300 4.500h4.300M0.200 6.600h3.200" stroke="#cfcfcf" stroke-width="0.900"/></svg>
<div class="b" style="left:54px;top:457px;width:150px;height:18px;background:#2a2a2a;border:1px solid #202020;border-radius:3px;box-sizing:border-box;"></div><div class="b" style="left:185px;top:458px;width:18px;height:16px;background:#373737;border-radius:0 2px 2px 0;"></div><svg class="b" style="left:187.6px;top:459.8px;" width="12" height="12" viewBox="0 0 12 12"><circle cx="6" cy="6" r="4.400" fill="none" stroke="#d2d2d2" stroke-width="1.100"/><circle cx="6" cy="6" r="1.600" fill="#d2d2d2"/></svg>
<svg class="b" style="left:58px;top:462.4px;" width="10" height="9" viewBox="0 0 10 9"><path d="M0.500 0.700C2 3.600 3.400 4.200 5.200 4.200H7.200" fill="none" stroke="#e0e0e0" stroke-width="1.300"/><path d="M0.700 8.300C1.300 5.600 2.600 4.200 5.200 4.200" fill="none" stroke="#4fc1ae" stroke-width="1.300"/><path d="M6.600 1.800L10 4.200L6.600 6.600z" fill="#e0e0e0"/></svg>
<div class="t " style="left:70.5px;top:457.80px;height:17px;line-height:17px;font-size:13px;color:#d2d2d2;letter-spacing:-0.335px;">Vayne (1) (Animator)</div>
<div class="b" style="left:212px;top:455px;width:23px;height:22px;background:#2d3649;border-radius:4px;"></div>
<svg class="b" style="left:215px;top:458px;" width="16" height="16" viewBox="0 0 16 16"><circle cx="8" cy="8" r="6.600" fill="none" stroke="#c6c6c6" stroke-width="1.100"/><circle cx="8" cy="8" r="4.500" fill="#c4573a"/></svg>
<div class="b" style="left:239px;top:455.0px;width:59px;height:22px;background:#2d3649;border-radius:4px;"></div><svg class="b" style="left:244px;top:458.7px;" width="12" height="14" viewBox="0 0 12 14"><g fill="#6e6e6e"><path d="M3.500 0.500h5v1.200h-1v4l2 1.800v1.200H6.600V13H5.400V8.700H2.500V7.500l2-1.800v-4h-1z"/></g></svg><svg class="b" style="left:263px;top:460.0px;" width="10" height="12" viewBox="0 0 10 12"><g stroke="#6e6e6e"><path d="M2.600 7.200V4.300A2.500 2.500 0 0 1 7.600 4.300V4.700" fill="none" stroke-width="1.100"/><rect x="1.600" y="7.200" width="6.800" height="3.500" fill="none" stroke-width="1.100"/></g></svg><svg class="b" style="left:279px;top:461.8px;" width="14" height="9" viewBox="0 0 14 9"><g stroke="#6e6e6e" fill="#6e6e6e"><path d="M0.600 4.300C2.600 1.400 5 0.700 7 0.700S11.400 1.400 13.400 4.300C11.400 7.200 9 7.900 7 7.900S2.600 7.200 0.600 4.300z" fill="none" stroke-width="1.200"/><circle cx="7" cy="3.600" r="3" stroke="none"/></g></svg>
<svg class="b" style="left:306px;top:461px;" width="2" height="10" viewBox="0 0 2 10"><g fill="#d4d4d4"><path d="M0 0h2v2H0zM0 4h2v2H0zM0 8h2v2H0z"/></g></svg>
<div class="b" style="left:38px;top:482px;width:278px;height:30px;background:#414141;"></div>
<div class="t " style="left:43.2px;top:488.80px;height:17px;line-height:17px;font-size:13px;color:#b8b8b8;letter-spacing:-0.269px;">Override 0</div>
<div class="b" style="left:212px;top:486px;width:23px;height:22px;background:#303030;border-radius:4px;"></div>
<svg class="b" style="left:215px;top:489px;" width="16" height="16" viewBox="0 0 16 16"><circle cx="8" cy="8" r="6.600" fill="none" stroke="#c6c6c6" stroke-width="1.100"/><circle cx="8" cy="8" r="4.500" fill="#c4573a"/></svg>
<div class="b" style="left:239px;top:486.0px;width:59px;height:22px;background:#303030;border-radius:4px;"></div><svg class="b" style="left:244px;top:489.7px;" width="12" height="14" viewBox="0 0 12 14"><g fill="#6e6e6e"><path d="M3.500 0.500h5v1.200h-1v4l2 1.800v1.200H6.600V13H5.400V8.700H2.500V7.500l2-1.800v-4h-1z"/></g></svg><svg class="b" style="left:263px;top:491.0px;" width="10" height="12" viewBox="0 0 10 12"><g stroke="#6e6e6e"><path d="M2.600 7.200V4.300A2.500 2.500 0 0 1 7.600 4.300V4.700" fill="none" stroke-width="1.100"/><rect x="1.600" y="7.200" width="6.800" height="3.500" fill="none" stroke-width="1.100"/></g></svg><svg class="b" style="left:279px;top:492.8px;" width="14" height="9" viewBox="0 0 14 9"><g stroke="#6e6e6e" fill="#6e6e6e"><path d="M0.600 4.300C2.600 1.400 5 0.700 7 0.700S11.400 1.400 13.400 4.300C11.400 7.200 9 7.900 7 7.900S2.600 7.200 0.600 4.300z" fill="none" stroke-width="1.200"/><circle cx="7" cy="3.600" r="3" stroke="none"/></g></svg>
<svg class="b" style="left:306px;top:492px;" width="2" height="10" viewBox="0 0 2 10"><g fill="#d4d4d4"><path d="M0 0h2v2H0zM0 4h2v2H0zM0 8h2v2H0z"/></g></svg>
<div class="b" style="left:398px;top:451px;width:233px;height:30px;background:#42464e;"></div><div class="b" style="left:398px;top:478px;width:233px;height:3px;background:#2a5b9c;"></div><div class="t cl" style="left:488.3px;top:459.45px;height:14.5px;line-height:14.5px;font-size:10.5px;color:#ececec;letter-spacing:-0.018px;">Vayne_idle</div>
<div class="b" style="left:405px;top:482px;width:139px;height:30px;background:#42464e;"></div><div class="b" style="left:405px;top:508px;width:139px;height:4px;background:#2a5b9c;"></div><div class="t cl" style="left:448.7px;top:490.45px;height:14.5px;line-height:14.5px;font-size:10.5px;color:#ececec;letter-spacing:0.110px;">Vayne_run</div>
<svg class="b" style="left:373.5px;top:463.2px;" width="13.5" height="7.4" viewBox="0 0 13.5 7.4"><path d="M3.600 1A2.600 2.600 0 1 0 3.600 6.200C5.200 6.200 8 1 9.600 1A2.600 2.600 0 1 1 9.600 6.200C8 6.200 5.200 1 3.600 1z" fill="none" stroke="#6a6a6a" stroke-width="1.300"/></svg>
<svg class="b" style="left:642px;top:463.2px;" width="13.5" height="7.4" viewBox="0 0 13.5 7.4"><path d="M3.600 1A2.600 2.600 0 1 0 3.600 6.200C5.200 6.200 8 1 9.600 1A2.600 2.600 0 1 1 9.600 6.200C8 6.200 5.200 1 3.600 1z" fill="none" stroke="#6a6a6a" stroke-width="1.300"/></svg>
<svg class="b" style="left:380.3px;top:493.6px;" width="13.5" height="7.4" viewBox="0 0 13.5 7.4"><path d="M3.600 1A2.600 2.600 0 1 0 3.600 6.200C5.200 6.200 8 1 9.600 1A2.600 2.600 0 1 1 9.600 6.200C8 6.200 5.200 1 3.600 1z" fill="none" stroke="#6a6a6a" stroke-width="1.300"/></svg>
<svg class="b" style="left:555px;top:493.6px;" width="13.5" height="7.4" viewBox="0 0 13.5 7.4"><path d="M3.600 1A2.600 2.600 0 1 0 3.600 6.200C5.200 6.200 8 1 9.600 1A2.600 2.600 0 1 1 9.600 6.200C8 6.200 5.200 1 3.600 1z" fill="none" stroke="#6a6a6a" stroke-width="1.300"/></svg>
<!-- playhead -->
<div class="b" style="left:435.7px;top:98px;width:1.6px;height:463px;background:#ffffff;"></div>
<svg class="b" style="left:431px;top:98px;" width="11.2" height="20" viewBox="0 0 11.2 20"><path d="M0 0H11.200V13.500L5.600 19.500L0 13.500z" fill="#ffffff"/></svg>
<!-- right panel -->
<svg class="b" style="left:1066px;top:-7px;" width="13" height="11" viewBox="0 0 13 11"><g fill="#c2c2c2"><path d="M0.200 1.200A1 1 0 0 1 1.200 0.200H4.600A1 1 0 0 1 5.500 0.800L6 2H11.200A1 1 0 0 1 12.200 3V9A1 1 0 0 1 11.200 10H1.200A1 1 0 0 1 0.200 9z"/></g></svg>
<svg class="b" style="left:1055px;top:-3px;" width="9" height="7" viewBox="0 0 9 7"><path d="M0.500 0.500H8.500L4.500 6.500z" fill="#6c6c6c"/></svg>
<div class="t " style="left:1083.0px;top:-12.50px;height:17px;line-height:17px;font-size:13px;color:#d2d2d2;">Scenes</div>
<svg class="b" style="left:1080px;top:7px;" width="12.4" height="13.6" viewBox="0 0 12.4 13.6"><path d="M6.200 0L12.200 3.400V10.200L6.200 13.600L0.200 10.200V3.400z" fill="#f0f0f0"/><g stroke="#383838" stroke-width="1.400" fill="none"><path d="M6.200 6.900V11.800M6.200 6.900L2.200 4.600M6.200 6.900L10.200 4.600"/></g><g fill="#383838"><path d="M4.500 0L6.200 3.100L7.900 0zM0 8.300L3 8.700L0 12zM12.400 8.300L9.400 8.700L12.400 12z"/></g></svg>
<div class="t " style="left:1096.0px;top:6.00px;height:17px;line-height:17px;font-size:13px;color:#d2d2d2;">SampleScene</div>
<svg class="b" style="left:1053px;top:26px;" width="8" height="10" viewBox="0 0 8 10"><path d="M0.500 0.500L7.300 5L0.500 9.500z" fill="#6c6c6c"/></svg>
<svg class="b" style="left:1066px;top:25px;" width="13" height="11" viewBox="0 0 13 11"><g fill="#c2c2c2"><path d="M0.200 1.200A1 1 0 0 1 1.200 0.200H4.600A1 1 0 0 1 5.500 0.800L6 2H11.200A1 1 0 0 1 12.200 3V9A1 1 0 0 1 11.200 10H1.200A1 1 0 0 1 0.200 9z"/></g></svg>
<div class="t " style="left:1083.0px;top:22.00px;height:17px;line-height:17px;font-size:13px;color:#9e9e9e;letter-spacing:0.294px;">Timeline</div>
<svg class="b" style="left:1039px;top:41.7px;" width="8" height="10" viewBox="0 0 8 10"><path d="M0.500 0.500L7.300 5L0.500 9.500z" fill="#6c6c6c"/></svg>
<svg class="b" style="left:1052px;top:40.7px;" width="13" height="11" viewBox="0 0 13 11"><g fill="#c2c2c2"><path d="M0.200 1.200A1 1 0 0 1 1.200 0.200H4.600A1 1 0 0 1 5.500 0.800L6 2H11.200A1 1 0 0 1 12.200 3V9A1 1 0 0 1 11.200 10H1.200A1 1 0 0 1 0.200 9z"/></g></svg>
<div class="t " style="left:1069.0px;top:37.50px;height:17px;line-height:17px;font-size:13px;color:#d2d2d2;font-weight:bold;">Packages</div>
<!-- context menu -->
<div class="b" style="left:713px;top:90px;width:378px;height:378px;background:#f2f2f2;box-shadow:1.5px 1.5px 2px rgba(0,0,0,.55);border:1px solid #dcdcdc;box-sizing:border-box;"></div>
<div class="t " style="left:748.2px;top:95.40px;height:17px;line-height:17px;font-size:13px;color:#000000;letter-spacing:-0.137px;">Copy</div>
<div class="t " style="left:1033.5px;top:95.40px;height:17px;line-height:17px;font-size:13px;color:#000000;letter-spacing:-0.066px;">Ctrl+C</div>
<div class="t " style="left:748.2px;top:117.40px;height:17px;line-height:17px;font-size:13px;color:#000000;letter-spacing:-0.389px;">Paste</div>
<div class="t " style="left:1033.5px;top:117.40px;height:17px;line-height:17px;font-size:13px;color:#000000;letter-spacing:0.053px;">Ctrl+V</div>
<div class="t " style="left:748.2px;top:139.40px;height:17px;line-height:17px;font-size:13px;color:#000000;letter-spacing:-0.066px;">Duplicate</div>
<div class="t " style="left:1032.5px;top:139.40px;height:17px;line-height:17px;font-size:13px;color:#000000;letter-spacing:0.100px;">Ctrl+D</div>
<div class="t " style="left:748.2px;top:161.40px;height:17px;line-height:17px;font-size:13px;color:#000000;letter-spacing:-0.180px;">Delete</div>
<div class="b" style="left:744px;top:184px;width:343px;height:1px;background:#d7d7d7;"></div>
<div class="t " style="left:748.2px;top:190.40px;height:17px;line-height:17px;font-size:13px;color:#000000;letter-spacing:-0.040px;">Lock</div>
<div class="t " style="left:1063.9px;top:190.40px;height:17px;line-height:17px;font-size:13px;color:#000000;letter-spacing:-1.730px;">L</div>
<div class="t " style="left:748.2px;top:212.40px;height:17px;line-height:17px;font-size:13px;color:#000000;letter-spacing:0.073px;">Lock selected track only</div>
<div class="t " style="left:748.2px;top:234.40px;height:17px;line-height:17px;font-size:13px;color:#000000;letter-spacing:0.225px;">Mute</div>
<div class="t " style="left:1059.0px;top:234.40px;height:17px;line-height:17px;font-size:13px;color:#000000;letter-spacing:0.470px;">M</div>
<div class="t " style="left:748.2px;top:256.40px;height:17px;line-height:17px;font-size:13px;color:#000000;letter-spacing:0.130px;">Mute selected track only</div>
<div class="b" style="left:744px;top:279px;width:343px;height:1px;background:#d7d7d7;"></div>
<div class="t " style="left:748.2px;top:285.40px;height:17px;line-height:17px;font-size:13px;color:#000000;letter-spacing:0.002px;">Track Offsets</div>
<svg class="b" style="left:1073px;top:288.5px;" width="6" height="9" viewBox="0 0 6 9"><path d="M1 0.800L4.800 4.500L1 8.200" fill="none" stroke="#222" stroke-width="1.100"/></svg>
<div class="b" style="left:716px;top:305px;width:372px;height:21.5px;background:#91c9f7;"></div>
<div class="t " style="left:748.2px;top:307.40px;height:17px;line-height:17px;font-size:13px;color:#000000;letter-spacing:0.162px;">Add Override Track</div>
<div class="b" style="left:744px;top:330px;width:343px;height:1px;background:#d7d7d7;"></div>
<div class="t " style="left:748.2px;top:336.40px;height:17px;line-height:17px;font-size:13px;color:#000000;letter-spacing:0.158px;">Create Annotation from clipboard contents</div>
<div class="b" style="left:744px;top:359px;width:343px;height:1px;background:#d7d7d7;"></div>
<div class="t " style="left:748.2px;top:365.40px;height:17px;line-height:17px;font-size:13px;color:#000000;letter-spacing:0.070px;">Add From Animation Clip</div>
<div class="b" style="left:744px;top:388px;width:343px;height:1px;background:#d7d7d7;"></div>
<div class="t " style="left:748.2px;top:394.40px;height:17px;line-height:17px;font-size:13px;color:#000000;letter-spacing:0.002px;">Add Signal Emitter</div>
<div class="t " style="left:748.2px;top:416.40px;height:17px;line-height:17px;font-size:13px;color:#000000;letter-spacing:-0.027px;">Add Signal Emitter From Signal Asset</div>
<div class="b" style="left:744px;top:439px;width:343px;height:1px;background:#d7d7d7;"></div>
<div class="t " style="left:748.2px;top:445.40px;height:17px;line-height:17px;font-size:13px;color:#000000;letter-spacing:0.172px;">Add Annotation</div>
</div></body></html>
